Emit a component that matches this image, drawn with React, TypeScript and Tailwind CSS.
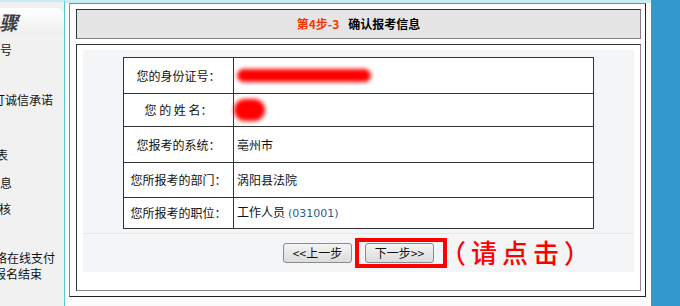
import React from 'react';

const rows = [
  { label: '您的身份证号：', kind: 'id', h: 'h-[36px]' },
  { label: '您 的 姓 名：', kind: 'name', h: 'h-[33px]' },
  { label: '您报考的系统：', value: '亳州市', h: 'h-[36px]' },
  { label: '您所报考的部门：', value: '涡阳县法院', h: 'h-[35px]' },
  { label: '您所报考的职位：', kind: 'job', h: 'h-[31px]' },
];

const App: React.FC = () => {
  return (
    <div
      className="w-[680px] h-[306px] flex overflow-hidden bg-white text-[12px] text-[#111]"
      style={{ fontFamily: '"Noto Sans CJK SC", "Noto Sans", sans-serif' }}
    >
      {/* SIDEBAR (cut off) */}
      <div className="w-[65px] shrink-0 h-full bg-[#f1f1f1] border-t-[2px] border-[#c9ecf3] border-r border-r-[#5cc5d3] overflow-hidden">
        <div className="mt-[6px] h-[26px] rounded-tr-[8px] bg-gradient-to-b from-white to-[#efefef] flex items-center">
          <span className="text-[19px] font-bold italic text-[#3d3d3d] leading-none -ml-[1px]">骤</span>
        </div>
        <div className="flex flex-col whitespace-nowrap leading-none">
          <span className="mt-[10px]">号</span>
          <span className="mt-[38px] -ml-[7px]">订诚信承诺</span>
          <span className="mt-[43px] -ml-[4px]">表</span>
          <span className="mt-[16px]">息</span>
          <span className="mt-[14px] -ml-[1px]">核</span>
          <span className="mt-[37px] -ml-[5px]">络在线支付</span>
          <span className="mt-[4px] -ml-[6px]">报名结束</span>
        </div>
      </div>

      {/* MAIN */}
      <div className="flex-1 h-full bg-[#fbfbfb] border-t-[3px] border-[#c9ecf3] pl-[4px] pr-[5px]">
        <div className="h-[294px] bg-white border border-t-[#8a8a8a] border-l-[#8a8a8a] border-b-[#222] border-r-[#222] pt-[5px] pl-[6px] pr-[4px]">
          {/* Header */}
          <div className="h-[30px] bg-[#e5e5e5] border border-t-[#333] border-l-[#333] border-b-[#808080] border-r-[#808080] flex items-center justify-center font-bold">
            <span className="text-[#ff3300]">第4步-3</span>
            <span className="ml-[9px] text-black">确认报考信息</span>
          </div>

          {/* Content box */}
          <div className="mt-[5px] h-[247px] bg-white border border-t-[#333] border-l-[#333] border-b-[#8a8a8a] border-r-[#8a8a8a] pt-[5px] px-[6px]">
            <div className="bg-[#f4f5f7]">
              <div className="pt-[7px] pb-[4px] border-b border-[#e7e8eb]">
                <table className="w-[471px] mx-auto border-collapse bg-white">
                  <tbody>
                    {rows.map((r) => (
                      <tr key={r.label} className={r.h}>
                        <td className="w-[110px] border border-[#333] text-center whitespace-pre">{r.label}</td>
                        <td className="border border-[#333] pl-[3px]">
                          {r.kind === 'id' && (
                            <span className="block w-[134px] h-[13px] rounded-full bg-[#ff0000] blur-[2px]" />
                          )}
                          {r.kind === 'name' && (
                            <span className="block -ml-[3px] w-[31px] h-[22px] rounded-full bg-[#ff0000] blur-[2px]" />
                          )}
                          {r.kind === 'job' && (
                            <span>
                              工作人员
                              <span className="ml-[3px] text-[11px] text-[#2d5d86]" style={{ fontFamily: '"DejaVu Sans", sans-serif' }}>
                                (031001)
                              </span>
                            </span>
                          )}
                          {r.value}
                        </td>
                      </tr>
                    ))}
                  </tbody>
                </table>
              </div>

              {/* Buttons */}
              <div className="h-[38px] flex items-center justify-center gap-[13px]">
                <button className="w-[69px] h-[20px] rounded-[3px] border border-[#8c8c8c] bg-gradient-to-b from-[#f4f4f4] to-[#dcdcdc] text-[12px] text-[#111] leading-none">
                  &lt;&lt;上一步
                </button>
                <div className="relative">
                  <button className="w-[69px] h-[20px] rounded-[3px] border border-[#8c8c8c] bg-gradient-to-b from-[#f4f4f4] to-[#dcdcdc] text-[12px] text-[#111] leading-none">
                    下一步&gt;&gt;
                  </button>
                  <div className="absolute -left-[10px] -top-[5px] w-[92px] h-[30px] border-[4px] border-[#ff0000]" />
                  <div className="absolute left-[75px] -top-[9px] whitespace-nowrap text-[26px] font-medium leading-[36px] text-[#ff0000] tracking-[5px]">
                    （请点击）
                  </div>
                </div>
              </div>
            </div>
          </div>
        </div>
      </div>

      {/* Right blue strip */}
      <div className="w-[29px] shrink-0 h-full bg-[#3399cc]" />
    </div>
  );
};

export default App;
